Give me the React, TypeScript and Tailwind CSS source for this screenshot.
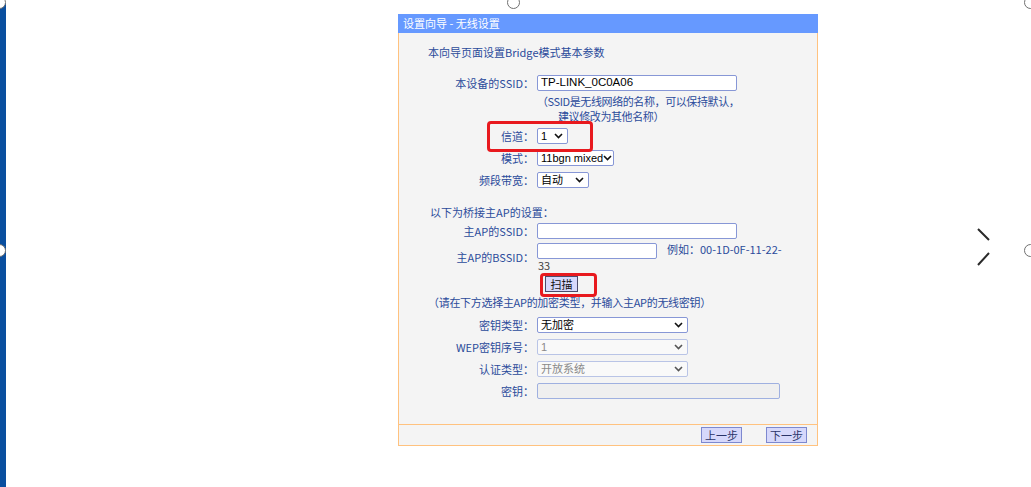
import React from "react";

const cjk = { fontFamily: '"Noto Sans CJK SC", "Noto Sans", sans-serif' };
const arial = { fontFamily: '"Liberation Sans", "Noto Sans CJK SC", sans-serif' };

function Chevron({ muted }: { muted?: boolean }) {
  return (
    <svg width="9" height="6" viewBox="0 0 9 6" className="shrink-0">
      <path d="M1 1l3.5 3.5L8 1" fill="none" stroke={muted ? "#555" : "#111"} strokeWidth="1.6" />
    </svg>
  );
}

function Select({ value, w, disabled }: { value: string; w: string; disabled?: boolean }) {
  return (
    <div
      className={`${w} h-[16px] flex items-center justify-between pl-[3px] pr-[4px] border rounded-[2px] text-[11px] leading-none whitespace-nowrap ${
        disabled ? "border-[#b9c4e6] bg-[#f9f9f9] text-[#8a8a8a]" : "border-[#8797d6] bg-white text-black"
      }`}
      style={arial}
    >
      <span>{value}</span>
      <Chevron muted={disabled} />
    </div>
  );
}

function Input({ value, w, disabled }: { value?: string; w: string; disabled?: boolean }) {
  return (
    <div
      className={`${w} h-[16px] flex items-center pl-[3px] border rounded-[2px] text-[11.5px] leading-none text-black ${
        disabled ? "border-[#9fb0e0] bg-[#efefef]" : "border-[#8797d6] bg-white"
      }`}
      style={arial}
    >
      {value}
    </div>
  );
}

function Row({ label, children, h = "h-[22px]" }: { label: string; children: React.ReactNode; h?: string }) {
  return (
    <div className={`flex items-center ${h}`}>
      <div className="w-[135px] text-right shrink-0">{label}</div>
      <div className="ml-[3px]">{children}</div>
    </div>
  );
}

function Btn({ children }: { children: React.ReactNode }) {
  return (
    <div className="w-[41px] h-[16px] flex items-center justify-center bg-[#d6d8fb] border border-[#7d88cf] text-[11px] text-[#2a3468] leading-none">
      {children}
    </div>
  );
}

function Handle({ className }: { className: string }) {
  return <div className={`absolute w-[13px] h-[13px] rounded-full border border-[#707070] bg-white ${className}`} />;
}

export default function App() {
  return (
    <div className="relative w-[1031px] h-[487px] bg-white overflow-hidden flex" style={cjk}>
      <div className="w-[6px] mt-[3px] bg-[#0a4f9f] rounded-tl-[6px] shrink-0" />
      <div className="flex-1 pl-[392px] pt-[14px]">
        <div className="w-[420px] text-[11px] text-[#2b4b9b]">
          <div className="h-[19px] bg-[#6699ff] text-white pl-[5px] flex items-center leading-none">设置向导 - 无线设置</div>
          <div className="bg-[#f4f4f4] border-x border-b border-[#ffc27f]">
            <div className="pt-[12px] pl-[29px] h-[27px] leading-[15px]">本向导页面设置Bridge模式基本参数</div>
            <div className="mt-[15px]">
              <Row label="本设备的SSID：" h="h-[16px]">
                <Input value="TP-LINK_0C0A06" w="w-[200px]" />
              </Row>
            </div>
            <div className="mt-[3px] leading-[15px] tracking-[-0.4px]">
              <div className="pl-[138px]">（SSID是无线网络的名称，可以保持默认，</div>
              <div className="pl-[159px]">建议修改为其他名称）</div>
            </div>
            <div className="mt-[1px]">
              <Row label="信道：">
                <div className="relative">
                  <Select value="1" w="w-[31px]" />
                  <div className="absolute left-[-50px] top-[-7px] w-[106px] h-[31px] border-[3px] border-[#e8191e] rounded-[4px]" />
                </div>
              </Row>
              <Row label="模式：">
                <Select value="11bgn mixed" w="w-[77px]" />
              </Row>
              <Row label="频段带宽：">
                <Select value="自动" w="w-[52px]" />
              </Row>
            </div>
            <div className="mt-[14px] pl-[31px] leading-[15px]">以下为桥接主AP的设置：</div>
            <Row label="主AP的SSID：">
              <Input w="w-[200px]" />
            </Row>
            <div className="flex items-center h-[30px]">
              <div className="w-[135px] text-right shrink-0">主AP的BSSID：</div>
              <div className="ml-[3px] pt-[1px] h-full">
                <div className="flex items-center">
                  <Input w="w-[120px]" />
                  <span className="ml-[10px] -mt-[3px]">例如：00-1D-0F-11-22-</span>
                </div>
                <div className="leading-[13px] text-[#444] pl-[1px]">33</div>
              </div>
            </div>
            <div className="mt-[4px] pl-[146px]">
              <div className="relative w-[33px]">
                <div className="w-[33px] h-[16px] flex items-center justify-center bg-[#d6d8fb] border border-[#4b4b6b] text-[11px] text-[#111] leading-none">
                  扫描
                </div>
                <div className="absolute left-[-5px] top-[-3px] w-[57px] h-[24px] border-[3px] border-[#e8191e] rounded-[4px]" />
              </div>
            </div>
            <div className="mt-[3px] pl-[29px] leading-[15px] tracking-[-0.3px]">（请在下方选择主AP的加密类型，并输入主AP的无线密钥）</div>
            <div className="mt-[4px] pb-[22px]">
              <Row label="密钥类型：">
                <Select value="无加密" w="w-[151px]" />
              </Row>
              <Row label="WEP密钥序号：">
                <Select value="1" w="w-[151px]" disabled />
              </Row>
              <Row label="认证类型：">
                <Select value="开放系统" w="w-[151px]" disabled />
              </Row>
              <Row label="密钥：">
                <Input w="w-[243px]" disabled />
              </Row>
            </div>
            <div className="border-t border-[#ffc27f] h-[21px] flex items-center justify-end gap-[24px] pr-[10px]">
              <Btn>上一步</Btn>
              <Btn>下一步</Btn>
            </div>
          </div>
        </div>
      </div>

      <svg className="absolute left-[976px] top-[227px]" width="16" height="40" viewBox="0 0 16 40">
        <path d="M2 2l11 11M13 26L2 38" stroke="#2a2a2a" strokeWidth="2" fill="none" />
      </svg>

      <Handle className="left-[-7px] top-[-4px]" />
      <Handle className="left-[507px] top-[-4px]" />
      <Handle className="left-[1024px] top-[-4px]" />
      <Handle className="left-[-7px] top-[244px]" />
      <Handle className="left-[1024px] top-[244px]" />
    </div>
  );
}
